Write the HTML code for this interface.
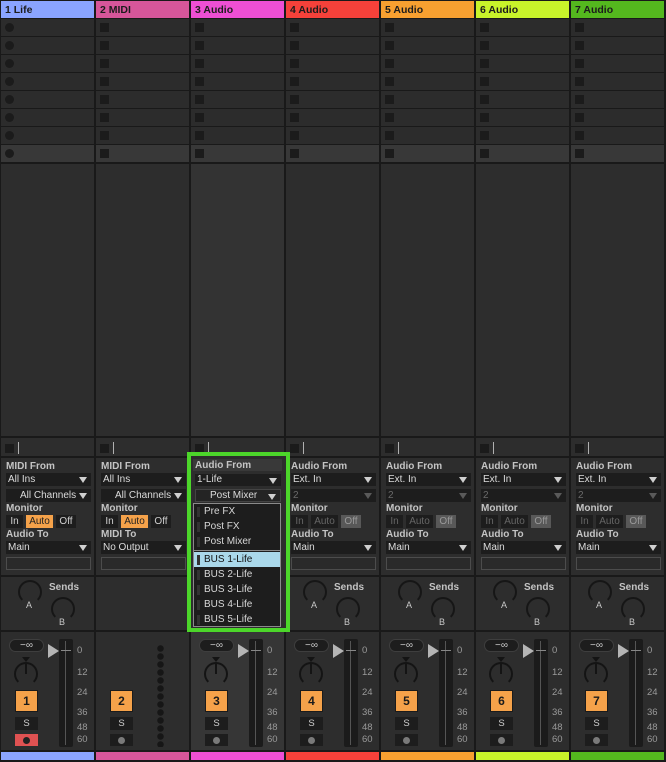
<!DOCTYPE html>
<html><head><meta charset="utf-8"><style>
*{margin:0;padding:0;box-sizing:border-box}
body{width:666px;height:762px;background:#191919;font-family:"Liberation Sans",sans-serif;position:relative;overflow:hidden}
.c{position:absolute;top:0;width:93px;height:762px}
.a{position:absolute}
.h{top:1px;left:0;width:93px;height:17px;font-size:10.5px;font-weight:bold;color:#1c1c1c;padding:3px 0 0 4px;line-height:12px}
.r{left:0;width:93px;height:17px;background:#2c2c2c}
.r.l{background:#383838}
.sq{left:4px;width:9px;height:9px;background:#1b1b1b}
.ci{left:4px;width:9px;height:9px;background:#1b1b1b;border-radius:50%}
.bg{background:#2d2d2d;left:0;width:93px}
.lb{left:5px;font-size:10px;font-weight:bold;color:#c4c4c4;line-height:11px}
.dd{left:5px;width:85px;height:13px;background:#1d1d1d;color:#dcdcdc;font-size:10px;line-height:13px;padding-left:2px;white-space:nowrap;overflow:hidden}
.dd:after{content:"";position:absolute;right:4px;top:4px;border-left:4px solid transparent;border-right:4px solid transparent;border-top:6px solid #cfcfcf}
.dd.g{color:#6a6a6a}.dd.g:after{border-top-color:#5a5a5a}
.dd.ch{padding-left:14px}
.b{height:13px;background:#1d1d1d;color:#cfcfcf;font-size:10px;line-height:13px;text-align:center}
.b.o{background:#f5a24a;color:#222}
.b.gr{color:#666}
.b.of{background:#585858;color:#999}
.box{left:5px;width:85px;height:13px;background:#2a2a2a;border:1px solid #4c4c4c}
.kn{width:24px;height:24px;border:2px solid #161616;border-bottom-color:transparent;border-radius:50%}
.kl{font-size:9px;color:#c8c8c8}
.snd{font-size:10px;font-weight:bold;color:#c4c4c4;left:48px;top:582px}
.pill{left:8px;top:639px;width:35px;height:13px;background:#1d1d1d;border:1px solid #3e3e3e;border-radius:7px;color:#cfcfcf;font-size:10px;line-height:11px;text-align:center}
.tri{left:47px;top:644px;border-top:7px solid transparent;border-bottom:7px solid transparent;border-left:11px solid #b5b5b5}
.mt{left:58px;top:639px;width:14px;height:108px;background:#1b1b1b;border-radius:2px}
.mt:before{content:"";position:absolute;left:6px;top:2px;width:1px;height:104px;background:#555}
.mt:after{content:"";position:absolute;left:2px;top:11px;width:10px;height:1px;background:#888}
.sc{left:76px;font-size:9.5px;color:#9a9a9a}
.pk{left:13px;top:662px;width:24px;height:24px;border:2px solid #141414;border-bottom-color:transparent;border-radius:50%}
.pkl{left:24px;top:663px;width:2px;height:11px;background:#141414}
.pkt{left:21px;top:657px;border-left:4px solid transparent;border-right:4px solid transparent;border-top:5px solid #141414}
.nb{left:14px;top:690px;width:23px;height:22px;background:#f5a24a;border:1px solid #1b1b1b;color:#1b1b1b;font-size:12px;font-weight:bold;text-align:center;line-height:20px}
.sb{left:14px;top:717px;width:23px;height:13px;background:#1d1d1d;color:#d0d0d0;font-size:9.5px;text-align:center;line-height:13px}
.ab{left:14px;top:734px;width:23px;height:12px;background:#1d1d1d}
.ab:after{content:"";position:absolute;left:8px;top:3px;width:7px;height:7px;border-radius:50%;background:#7a7a7a}
.ab.red{background:#e05252}
.ab.red:after{background:#222}
.bar{left:0;top:752px;width:93px;height:8px}
.mix{left:0;top:632px;width:93px;height:118px;background:#2d2d2d}
.ln{left:17px;top:442px;width:1px;height:12px;background:#b0b0b0}
.li{left:0;width:86px;height:15px;font-size:10px;color:#d8d8d8;line-height:15px;padding-left:10px}
.li:before{content:"";position:absolute;left:3px;top:3px;width:3px;height:10px;background:#333}
</style></head><body>

<div class="c" style="left:1px">
<div class="a h" style="background:#8aa4ff">1 Life</div>
<div class="a r" style="top:19px"></div><div class="a ci" style="top:23px"></div>
<div class="a r" style="top:37px"></div><div class="a ci" style="top:41px"></div>
<div class="a r" style="top:55px"></div><div class="a ci" style="top:59px"></div>
<div class="a r" style="top:73px"></div><div class="a ci" style="top:77px"></div>
<div class="a r" style="top:91px"></div><div class="a ci" style="top:95px"></div>
<div class="a r" style="top:109px"></div><div class="a ci" style="top:113px"></div>
<div class="a r" style="top:127px"></div><div class="a ci" style="top:131px"></div>
<div class="a r l" style="top:145px"></div><div class="a ci" style="top:149px"></div>
<div class="a bg" style="top:164px;height:272px"></div>
<div class="a bg" style="top:438px;height:18px"></div><div class="a sq" style="top:444px"></div><div class="a ln"></div>
<div class="a bg" style="top:458px;height:117px"></div>
<div class="a lb" style="top:461px">MIDI From</div>
<div class="a dd" style="top:473px">All Ins</div>
<div class="a dd ch" style="top:489px">All Channels</div>
<div class="a lb" style="top:503px">Monitor</div>
<div class="a b" style="left:5px;top:515px;width:17px">In</div>
<div class="a b o" style="left:25px;top:515px;width:27px">Auto</div>
<div class="a b" style="left:55px;top:515px;width:20px">Off</div>
<div class="a lb" style="top:529px">Audio To</div>
<div class="a dd" style="top:541px">Main</div>
<div class="a box" style="top:557px"></div>
<div class="a bg" style="top:577px;height:53px"></div>
<div class="a kn" style="left:17px;top:580px"></div><div class="a kl" style="left:25px;top:600px">A</div>
<div class="a kn" style="left:50px;top:597px"></div><div class="a kl" style="left:58px;top:617px">B</div>
<div class="a snd">Sends</div>
<div class="a mix"></div>
<div class="a pill">−∞</div><div class="a tri"></div><div class="a mt"></div>
<div class="a sc" style="top:645px">0</div><div class="a sc" style="top:667px">12</div><div class="a sc" style="top:687px">24</div><div class="a sc" style="top:707px">36</div><div class="a sc" style="top:722px">48</div><div class="a sc" style="top:734px">60</div>
<div class="a pkt"></div><div class="a pk"></div><div class="a pkl"></div>
<div class="a nb">1</div><div class="a sb">S</div>
<div class="a ab red"></div>
<div class="a bar" style="background:#8aa4ff"></div>
</div>

<div class="c" style="left:96px">
<div class="a h" style="background:#d6569a">2 MIDI</div>
<div class="a r" style="top:19px"></div><div class="a sq" style="top:23px"></div>
<div class="a r" style="top:37px"></div><div class="a sq" style="top:41px"></div>
<div class="a r" style="top:55px"></div><div class="a sq" style="top:59px"></div>
<div class="a r" style="top:73px"></div><div class="a sq" style="top:77px"></div>
<div class="a r" style="top:91px"></div><div class="a sq" style="top:95px"></div>
<div class="a r" style="top:109px"></div><div class="a sq" style="top:113px"></div>
<div class="a r" style="top:127px"></div><div class="a sq" style="top:131px"></div>
<div class="a r l" style="top:145px"></div><div class="a sq" style="top:149px"></div>
<div class="a bg" style="top:164px;height:272px"></div>
<div class="a bg" style="top:438px;height:18px"></div><div class="a sq" style="top:444px"></div><div class="a ln"></div>
<div class="a bg" style="top:458px;height:117px"></div>
<div class="a lb" style="top:461px">MIDI From</div>
<div class="a dd" style="top:473px">All Ins</div>
<div class="a dd ch" style="top:489px">All Channels</div>
<div class="a lb" style="top:503px">Monitor</div>
<div class="a b" style="left:5px;top:515px;width:17px">In</div>
<div class="a b o" style="left:25px;top:515px;width:27px">Auto</div>
<div class="a b" style="left:55px;top:515px;width:20px">Off</div>
<div class="a lb" style="top:529px">MIDI To</div>
<div class="a dd" style="top:541px">No Output</div>
<div class="a box" style="top:557px"></div>
<div class="a bg" style="top:577px;height:53px"></div>
<div class="a mix"></div>
<div class="a" style="left:61px;top:645px;width:7px;height:102px;background:radial-gradient(circle at 3.5px 3.5px,#161616 3px,transparent 3.5px) 0 0/7px 8px repeat-y"></div>
<div class="a nb">2</div><div class="a sb">S</div>
<div class="a ab"></div>
<div class="a bar" style="background:#d6569a"></div>
</div>

<div class="c" style="left:191px">
<div class="a h" style="background:#ee4fd4">3 Audio</div>
<div class="a r" style="top:19px"></div><div class="a sq" style="top:23px"></div>
<div class="a r" style="top:37px"></div><div class="a sq" style="top:41px"></div>
<div class="a r" style="top:55px"></div><div class="a sq" style="top:59px"></div>
<div class="a r" style="top:73px"></div><div class="a sq" style="top:77px"></div>
<div class="a r" style="top:91px"></div><div class="a sq" style="top:95px"></div>
<div class="a r" style="top:109px"></div><div class="a sq" style="top:113px"></div>
<div class="a r" style="top:127px"></div><div class="a sq" style="top:131px"></div>
<div class="a r l" style="top:145px"></div><div class="a sq" style="top:149px"></div>
<div class="a bg" style="top:164px;height:272px;background:#333"></div>
<div class="a bg" style="top:438px;height:18px"></div><div class="a sq" style="top:444px"></div><div class="a ln"></div>
<div class="a mix" style="background:#363636"></div>
<div class="a pill">−∞</div><div class="a tri"></div><div class="a mt"></div>
<div class="a sc" style="top:645px">0</div><div class="a sc" style="top:667px">12</div><div class="a sc" style="top:687px">24</div><div class="a sc" style="top:707px">36</div><div class="a sc" style="top:722px">48</div><div class="a sc" style="top:734px">60</div>
<div class="a pkt"></div><div class="a pk"></div><div class="a pkl"></div>
<div class="a nb">3</div><div class="a sb">S</div>
<div class="a ab"></div>
<div class="a bar" style="background:#ee4fd4"></div>
</div>

<div class="c" style="left:286px">
<div class="a h" style="background:#f5413a">4 Audio</div>
<div class="a r" style="top:19px"></div><div class="a sq" style="top:23px"></div>
<div class="a r" style="top:37px"></div><div class="a sq" style="top:41px"></div>
<div class="a r" style="top:55px"></div><div class="a sq" style="top:59px"></div>
<div class="a r" style="top:73px"></div><div class="a sq" style="top:77px"></div>
<div class="a r" style="top:91px"></div><div class="a sq" style="top:95px"></div>
<div class="a r" style="top:109px"></div><div class="a sq" style="top:113px"></div>
<div class="a r" style="top:127px"></div><div class="a sq" style="top:131px"></div>
<div class="a r l" style="top:145px"></div><div class="a sq" style="top:149px"></div>
<div class="a bg" style="top:164px;height:272px"></div>
<div class="a bg" style="top:438px;height:18px"></div><div class="a sq" style="top:444px"></div><div class="a ln"></div>
<div class="a bg" style="top:458px;height:117px"></div>
<div class="a lb" style="top:461px">Audio From</div>
<div class="a dd" style="top:473px">Ext. In</div>
<div class="a dd g" style="top:489px">2</div>
<div class="a lb" style="top:503px">Monitor</div>
<div class="a b gr" style="left:5px;top:515px;width:17px">In</div>
<div class="a b gr" style="left:25px;top:515px;width:27px">Auto</div>
<div class="a b of" style="left:55px;top:515px;width:20px">Off</div>
<div class="a lb" style="top:529px">Audio To</div>
<div class="a dd" style="top:541px">Main</div>
<div class="a box" style="top:557px"></div>
<div class="a bg" style="top:577px;height:53px"></div>
<div class="a kn" style="left:17px;top:580px"></div><div class="a kl" style="left:25px;top:600px">A</div>
<div class="a kn" style="left:50px;top:597px"></div><div class="a kl" style="left:58px;top:617px">B</div>
<div class="a snd">Sends</div>
<div class="a mix"></div>
<div class="a pill">−∞</div><div class="a tri"></div><div class="a mt"></div>
<div class="a sc" style="top:645px">0</div><div class="a sc" style="top:667px">12</div><div class="a sc" style="top:687px">24</div><div class="a sc" style="top:707px">36</div><div class="a sc" style="top:722px">48</div><div class="a sc" style="top:734px">60</div>
<div class="a pkt"></div><div class="a pk"></div><div class="a pkl"></div>
<div class="a nb">4</div><div class="a sb">S</div>
<div class="a ab"></div>
<div class="a bar" style="background:#f5413a"></div>
</div>

<div class="c" style="left:381px">
<div class="a h" style="background:#f7a030">5 Audio</div>
<div class="a r" style="top:19px"></div><div class="a sq" style="top:23px"></div>
<div class="a r" style="top:37px"></div><div class="a sq" style="top:41px"></div>
<div class="a r" style="top:55px"></div><div class="a sq" style="top:59px"></div>
<div class="a r" style="top:73px"></div><div class="a sq" style="top:77px"></div>
<div class="a r" style="top:91px"></div><div class="a sq" style="top:95px"></div>
<div class="a r" style="top:109px"></div><div class="a sq" style="top:113px"></div>
<div class="a r" style="top:127px"></div><div class="a sq" style="top:131px"></div>
<div class="a r l" style="top:145px"></div><div class="a sq" style="top:149px"></div>
<div class="a bg" style="top:164px;height:272px"></div>
<div class="a bg" style="top:438px;height:18px"></div><div class="a sq" style="top:444px"></div><div class="a ln"></div>
<div class="a bg" style="top:458px;height:117px"></div>
<div class="a lb" style="top:461px">Audio From</div>
<div class="a dd" style="top:473px">Ext. In</div>
<div class="a dd g" style="top:489px">2</div>
<div class="a lb" style="top:503px">Monitor</div>
<div class="a b gr" style="left:5px;top:515px;width:17px">In</div>
<div class="a b gr" style="left:25px;top:515px;width:27px">Auto</div>
<div class="a b of" style="left:55px;top:515px;width:20px">Off</div>
<div class="a lb" style="top:529px">Audio To</div>
<div class="a dd" style="top:541px">Main</div>
<div class="a box" style="top:557px"></div>
<div class="a bg" style="top:577px;height:53px"></div>
<div class="a kn" style="left:17px;top:580px"></div><div class="a kl" style="left:25px;top:600px">A</div>
<div class="a kn" style="left:50px;top:597px"></div><div class="a kl" style="left:58px;top:617px">B</div>
<div class="a snd">Sends</div>
<div class="a mix"></div>
<div class="a pill">−∞</div><div class="a tri"></div><div class="a mt"></div>
<div class="a sc" style="top:645px">0</div><div class="a sc" style="top:667px">12</div><div class="a sc" style="top:687px">24</div><div class="a sc" style="top:707px">36</div><div class="a sc" style="top:722px">48</div><div class="a sc" style="top:734px">60</div>
<div class="a pkt"></div><div class="a pk"></div><div class="a pkl"></div>
<div class="a nb">5</div><div class="a sb">S</div>
<div class="a ab"></div>
<div class="a bar" style="background:#f7a030"></div>
</div>

<div class="c" style="left:476px">
<div class="a h" style="background:#c8f32a">6 Audio</div>
<div class="a r" style="top:19px"></div><div class="a sq" style="top:23px"></div>
<div class="a r" style="top:37px"></div><div class="a sq" style="top:41px"></div>
<div class="a r" style="top:55px"></div><div class="a sq" style="top:59px"></div>
<div class="a r" style="top:73px"></div><div class="a sq" style="top:77px"></div>
<div class="a r" style="top:91px"></div><div class="a sq" style="top:95px"></div>
<div class="a r" style="top:109px"></div><div class="a sq" style="top:113px"></div>
<div class="a r" style="top:127px"></div><div class="a sq" style="top:131px"></div>
<div class="a r l" style="top:145px"></div><div class="a sq" style="top:149px"></div>
<div class="a bg" style="top:164px;height:272px"></div>
<div class="a bg" style="top:438px;height:18px"></div><div class="a sq" style="top:444px"></div><div class="a ln"></div>
<div class="a bg" style="top:458px;height:117px"></div>
<div class="a lb" style="top:461px">Audio From</div>
<div class="a dd" style="top:473px">Ext. In</div>
<div class="a dd g" style="top:489px">2</div>
<div class="a lb" style="top:503px">Monitor</div>
<div class="a b gr" style="left:5px;top:515px;width:17px">In</div>
<div class="a b gr" style="left:25px;top:515px;width:27px">Auto</div>
<div class="a b of" style="left:55px;top:515px;width:20px">Off</div>
<div class="a lb" style="top:529px">Audio To</div>
<div class="a dd" style="top:541px">Main</div>
<div class="a box" style="top:557px"></div>
<div class="a bg" style="top:577px;height:53px"></div>
<div class="a kn" style="left:17px;top:580px"></div><div class="a kl" style="left:25px;top:600px">A</div>
<div class="a kn" style="left:50px;top:597px"></div><div class="a kl" style="left:58px;top:617px">B</div>
<div class="a snd">Sends</div>
<div class="a mix"></div>
<div class="a pill">−∞</div><div class="a tri"></div><div class="a mt"></div>
<div class="a sc" style="top:645px">0</div><div class="a sc" style="top:667px">12</div><div class="a sc" style="top:687px">24</div><div class="a sc" style="top:707px">36</div><div class="a sc" style="top:722px">48</div><div class="a sc" style="top:734px">60</div>
<div class="a pkt"></div><div class="a pk"></div><div class="a pkl"></div>
<div class="a nb">6</div><div class="a sb">S</div>
<div class="a ab"></div>
<div class="a bar" style="background:#c8f32a"></div>
</div>

<div class="c" style="left:571px">
<div class="a h" style="background:#54b81e">7 Audio</div>
<div class="a r" style="top:19px"></div><div class="a sq" style="top:23px"></div>
<div class="a r" style="top:37px"></div><div class="a sq" style="top:41px"></div>
<div class="a r" style="top:55px"></div><div class="a sq" style="top:59px"></div>
<div class="a r" style="top:73px"></div><div class="a sq" style="top:77px"></div>
<div class="a r" style="top:91px"></div><div class="a sq" style="top:95px"></div>
<div class="a r" style="top:109px"></div><div class="a sq" style="top:113px"></div>
<div class="a r" style="top:127px"></div><div class="a sq" style="top:131px"></div>
<div class="a r l" style="top:145px"></div><div class="a sq" style="top:149px"></div>
<div class="a bg" style="top:164px;height:272px"></div>
<div class="a bg" style="top:438px;height:18px"></div><div class="a sq" style="top:444px"></div><div class="a ln"></div>
<div class="a bg" style="top:458px;height:117px"></div>
<div class="a lb" style="top:461px">Audio From</div>
<div class="a dd" style="top:473px">Ext. In</div>
<div class="a dd g" style="top:489px">2</div>
<div class="a lb" style="top:503px">Monitor</div>
<div class="a b gr" style="left:5px;top:515px;width:17px">In</div>
<div class="a b gr" style="left:25px;top:515px;width:27px">Auto</div>
<div class="a b of" style="left:55px;top:515px;width:20px">Off</div>
<div class="a lb" style="top:529px">Audio To</div>
<div class="a dd" style="top:541px">Main</div>
<div class="a box" style="top:557px"></div>
<div class="a bg" style="top:577px;height:53px"></div>
<div class="a kn" style="left:17px;top:580px"></div><div class="a kl" style="left:25px;top:600px">A</div>
<div class="a kn" style="left:50px;top:597px"></div><div class="a kl" style="left:58px;top:617px">B</div>
<div class="a snd">Sends</div>
<div class="a mix"></div>
<div class="a pill">−∞</div><div class="a tri"></div><div class="a mt"></div>
<div class="a sc" style="top:645px">0</div><div class="a sc" style="top:667px">12</div><div class="a sc" style="top:687px">24</div><div class="a sc" style="top:707px">36</div><div class="a sc" style="top:722px">48</div><div class="a sc" style="top:734px">60</div>
<div class="a pkt"></div><div class="a pk"></div><div class="a pkl"></div>
<div class="a nb">7</div><div class="a sb">S</div>
<div class="a ab"></div>
<div class="a bar" style="background:#54b81e"></div>
</div>

<div class="a" style="left:187px;top:452px;width:103px;height:180px;border:4px solid #4cd62a;background:#2d2d2d;z-index:5">
<div class="a" style="left:2px;top:3px;width:89px;height:12px;background:#393939"></div>
<div class="a lb" style="left:4px;top:4px">Audio From</div>
<div class="a dd" style="left:4px;top:18px;width:86px;height:12px;line-height:12px">1-Life</div>
<div class="a dd ch" style="left:4px;top:33px;width:86px;height:13px;line-height:11px;background:#242424;border:1px solid #444">Post Mixer</div>
<div class="a" style="left:2px;top:47px;width:88px;height:124px;background:#1d1d1d;border:1px solid #8a8a8a">
<div class="a li" style="top:0">Pre FX</div>
<div class="a li" style="top:15px">Post FX</div>
<div class="a li" style="top:30px">Post Mixer</div>
<div class="a" style="left:0;top:46px;width:86px;height:1px;background:#8a8a8a"></div>
<div class="a li" style="top:48px;background:#aad8ea;color:#111">BUS 1-Life</div>
<div class="a li" style="top:63px">BUS 2-Life</div>
<div class="a li" style="top:78px">BUS 3-Life</div>
<div class="a li" style="top:93px">BUS 4-Life</div>
<div class="a li" style="top:108px">BUS 5-Life</div>
</div>
</div>

</body></html>
